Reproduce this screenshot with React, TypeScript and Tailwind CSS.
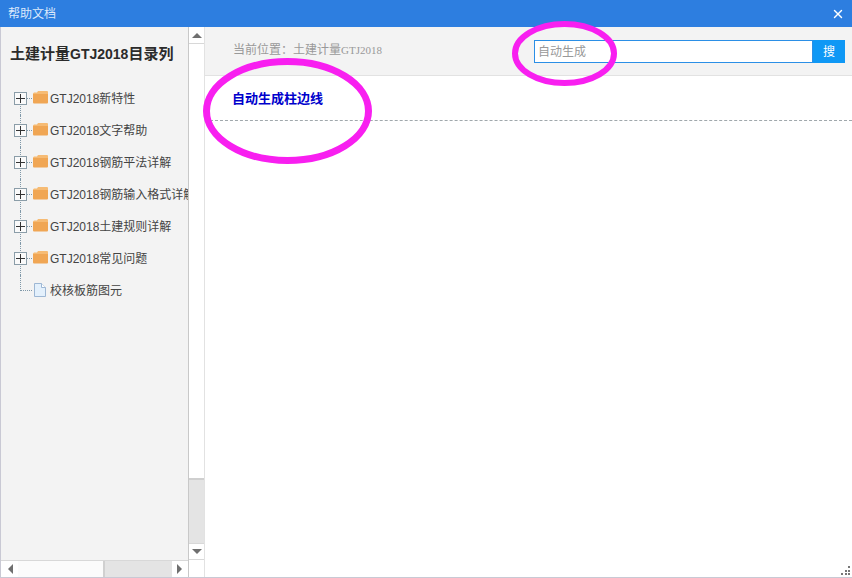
import { X } from 'lucide-react';

const FONT = "font-['Liberation_Sans','Noto_Sans_CJK_SC',sans-serif]";

const treeItems = [
  'GTJ2018新特性',
  'GTJ2018文字帮助',
  'GTJ2018钢筋平法详解',
  'GTJ2018钢筋输入格式详解',
  'GTJ2018土建规则详解',
  'GTJ2018常见问题',
];

const FolderIcon = () => (
  <svg width="15" height="13" viewBox="0 0 15 13" className="shrink-0">
    <path d="M0 2.5 L1 1.5 H4 L5 0 H14 Q15 0 15 1 V3 H0 Z" fill="#f6bb74" />
    <path d="M0 3 H15 V11.5 Q15 12.5 14 12.5 H1 Q0 12.5 0 11.5 Z" fill="#f0a654" />
  </svg>
);

const FileIcon = () => (
  <svg width="12" height="14" viewBox="0 0 12 14" className="shrink-0">
    <path d="M.5 .5 H7.5 L11.5 4.5 V13.5 H.5 Z" fill="#e3f0fc" stroke="#9db7d4" />
    <path d="M7.5 .5 V4.5 H11.5" fill="#ffffff" stroke="#9db7d4" />
  </svg>
);

const Arrow = ({ dir }: { dir: 'up' | 'down' | 'left' | 'right' }) => {
  const points = {
    up: '0,6 5,1 10,6',
    down: '0,1 10,1 5,6',
    left: '7,0 7,10 2,5',
    right: '1,0 1,10 6,5',
  }[dir];
  const vertical = dir === 'up' || dir === 'down';
  return (
    <svg width={vertical ? 10 : 8} height={vertical ? 7 : 10}>
      <polygon points={points} fill="#6f6f6f" />
    </svg>
  );
};

const TreeRow = ({ label, index, last }: { label: string; index: number; last: number }) => (
  <div className="relative flex h-8 items-center pl-[32px] whitespace-nowrap">
    <span
      className={`absolute left-[19px] border-l border-dotted border-[#7f98a8] ${
        index === 0 ? 'top-4 bottom-0' : index === last ? 'top-0 h-4' : 'top-0 bottom-0'
      }`}
    />
    <span className="absolute left-[19px] top-[15px] w-3 border-t border-dotted border-[#7f98a8]" />
    {index !== last && (
      <span className="absolute left-[13px] top-[9px] flex size-[13px] items-center justify-center border border-[#8b9da8] bg-[#fafafa]">
        <span className="absolute h-px w-[9px] bg-[#333333]" />
        <span className="absolute h-[9px] w-px bg-[#333333]" />
      </span>
    )}
    {index === last ? (
      <span className="mb-[2px] ml-px mr-[4px]">
        <FileIcon />
      </span>
    ) : (
      <span className="mb-[3px] mr-[2px]">
        <FolderIcon />
      </span>
    )}
    <span className="text-xs text-[#444444]">{label}</span>
  </div>
);

const Sidebar = () => (
  <aside className="flex h-full w-[205px] shrink-0 border-l border-r border-l-[#c9c9d4] border-r-[#e2e2e2]">
    <div className="flex min-w-0 flex-1 flex-col bg-[#f3f3f3]">
      <div className="min-h-0 flex-1 overflow-hidden">
        <h1 className="flex h-[54px] items-center pl-[9px] text-[15px] font-bold whitespace-nowrap text-[#2b2b2b]">
          土建计量<span className="text-[14px]">GTJ2018</span>目录列
        </h1>
        <div className="pt-[2px]">
          {[...treeItems, '校核板筋图元'].map((item, i) => (
            <TreeRow key={item} label={item} index={i} last={treeItems.length} />
          ))}
        </div>
      </div>
      <div className="flex h-[17px] shrink-0 border-t border-[#d8d8d8] bg-white">
        <div className="flex w-[17px] items-center justify-center">
          <Arrow dir="left" />
        </div>
        <div className="w-[87px] border-r-2 border-[#d0d0d0] bg-[#fbfbfb]" />
        <div className="flex-1 bg-[#e4e4e4]" />
        <div className="flex w-[16px] items-center justify-center">
          <Arrow dir="right" />
        </div>
      </div>
    </div>
    <div className="flex w-4 shrink-0 flex-col border-l border-[#c8c8c8] bg-white">
      <div className="flex h-[17px] items-center justify-center border-b border-[#d8d8d8]">
        <Arrow dir="up" />
      </div>
      <div className="h-[436px] border-b-2 border-[#cfcfcf] bg-white" />
      <div className="h-[63px] bg-[#e4e4e4]" />
      <div className="flex h-[17px] items-center justify-center border-y border-[#d8d8d8]">
        <Arrow dir="down" />
      </div>
      <div className="flex-1 bg-white" />
    </div>
  </aside>
);

const Content = () => (
  <main className="flex min-w-0 flex-1 flex-col">
    <div className="flex h-[49px] shrink-0 items-center justify-between border-b border-[#e2e2e2] bg-[#f3f3f3] pl-7 pr-[7px]">
      <div className="pb-[2px] text-xs text-[#999999]">
        当前位置：土建计量
        <span className="font-['Liberation_Serif',serif] text-[11px]">GTJ2018</span>
      </div>
      <div className="flex h-[23px] w-[311px]">
        <div className="flex flex-1 items-center border border-[#2b8fe6] bg-white pl-[3px] pt-px text-xs text-[#999999]">
          自动生成
        </div>
        <button className="w-8 bg-[#0f98f5] pt-[2px] text-xs text-white">搜</button>
      </div>
    </div>
    <div className="flex-1 bg-white">
      <div className="flex h-[45px] items-center border-b border-dashed border-[#a0a8ac] pl-[27px] pt-px">
        <h2 className="text-[13px] font-bold text-[#0000cc]">自动生成柱边线</h2>
      </div>
    </div>
  </main>
);

export default function App() {
  return (
    <div className={`relative flex h-[578px] w-[852px] flex-col overflow-hidden bg-white ${FONT}`}>
      <header className="flex h-[27px] shrink-0 items-center justify-between bg-[#2d7ee0] pl-2 pr-[7px]">
        <span className="text-xs text-[#dce9fb]">帮助文档</span>
        <X size={14} strokeWidth={2.5} className="text-white" />
      </header>
      <div className="flex min-h-0 flex-1 border-b border-[#c9c9d4]">
        <Sidebar />
        <Content />
      </div>

      {/* annotation circles drawn over the screenshot */}
      <svg width="852" height="578" className="pointer-events-none absolute inset-0">
        <ellipse cx="564.5" cy="53.5" rx="49.5" ry="29.5" fill="none" stroke="#f81ff0" strokeWidth="6" />
        <ellipse cx="287.5" cy="111" rx="81" ry="49.5" fill="none" stroke="#f81ff0" strokeWidth="7" />
        <g fill="#777777">
          <rect x="848" y="566" width="2" height="2" />
          <rect x="845" y="570" width="2" height="2" />
          <rect x="848" y="570" width="2" height="2" />
          <rect x="841" y="573" width="2" height="2" />
          <rect x="845" y="573" width="2" height="2" />
          <rect x="848" y="573" width="2" height="2" />
        </g>
      </svg>
    </div>
  );
}
